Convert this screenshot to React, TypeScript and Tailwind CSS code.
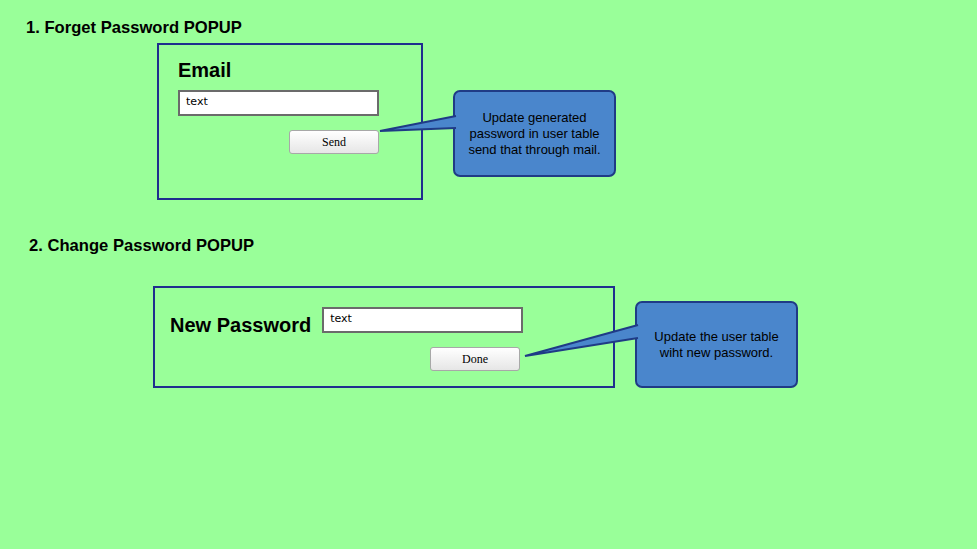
import React from "react";

const Field = () => (
  <div className="h-[26px] border-2 border-[#6b6b6b] bg-white px-[6px] pt-[3px] font-['Comic_Sans_MS','DejaVu_Sans',sans-serif] text-[11px] leading-[14px] text-black">
    text
  </div>
);

const MockButton = ({ label }: { label: string }) => (
  <button className="h-[24px] w-[90px] rounded-[3px] border border-[#a8a8a8] bg-gradient-to-b from-white to-[#e6e6e6] font-['Liberation_Serif',serif] text-[12px] text-black">
    {label}
  </button>
);

const Callout = ({ lines }: { lines: string[] }) => (
  <div className="flex w-[163px] flex-col items-center justify-center rounded-[7px] border-2 border-[#1f3b86] bg-[#4a86cc] text-center text-[13px] leading-[16px] text-black">
    {lines.map((l) => (
      <span key={l}>{l}</span>
    ))}
  </div>
);

export default function App() {
  return (
    <div className="relative h-[549px] w-[977px] overflow-hidden bg-[#99ff99] font-['Liberation_Sans',Arial,sans-serif]">
      {/* section 1 */}
      <h1 className="ml-[26px] pt-[18px] text-[16.6px] font-bold leading-[20px] text-black">
        1. Forget Password POPUP
      </h1>
      <div className="mt-[5px] flex items-start">
        <div className="ml-[157px] h-[157px] w-[266px] border-2 border-[#1f2e8e] pl-[19px] pr-[42px] pt-[13px]">
          <div className="text-[20px] font-bold leading-[24px] text-black">Email</div>
          <div className="mt-[8px]">
            <Field />
          </div>
          <div className="mt-[14px] flex justify-end">
            <MockButton label="Send" />
          </div>
        </div>
        <div className="ml-[30px] mt-[47px] flex h-[87px]">
          <Callout lines={["Update generated", "password in user table", "send that through mail."]} />
        </div>
      </div>

      {/* section 2 */}
      <h1 className="ml-[29px] mt-[36px] text-[16.6px] font-bold leading-[20px] text-black">
        2. Change Password POPUP
      </h1>
      <div className="mt-[30px] flex items-start">
        <div className="ml-[153px] h-[102px] w-[462px] border-2 border-[#1f2e8e] pl-[15px] pt-[19px]">
          <div className="flex items-start">
            <div className="mt-[6px] text-[20px] font-bold leading-[24px] text-black">New Password</div>
            <div className="ml-[11px] w-[201px]">
              <Field />
            </div>
          </div>
          <div className="mt-[10px] flex justify-end pr-[93px]">
            <MockButton label="Done" />
          </div>
        </div>
        <div className="ml-[20px] mt-[15px] flex h-[87px]">
          <Callout lines={["Update the user table", "wiht new password."]} />
        </div>
      </div>

      {/* callout pointers */}
      <svg className="pointer-events-none absolute inset-0" width="977" height="549">
        <polygon points="380,131 456,116 456,128" fill="#4a86cc" />
        <polyline points="456,116 380,131 456,128" fill="none" stroke="#1f3b86" strokeWidth="2" strokeLinejoin="miter" />
        <polygon points="525,356 638,325 638,338" fill="#4a86cc" />
        <polyline points="638,325 525,356 638,338" fill="none" stroke="#1f3b86" strokeWidth="2" />
      </svg>
    </div>
  );
}
